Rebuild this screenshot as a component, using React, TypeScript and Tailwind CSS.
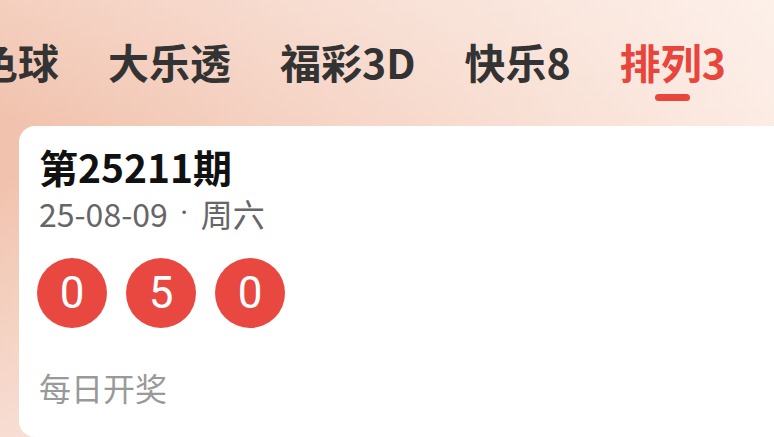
const tabs = ['双色球', '大乐透', '福彩3D', '快乐8', '排列3']
const active = 4
const balls = ['0', '5', '0']

export default function App() {
  return (
    <div
      className="relative w-[774px] h-[437px] overflow-hidden bg-[linear-gradient(90deg,#f1c2ad_0%,#f6d6c8_45%,#fcece4_100%)]"
      style={{ fontFamily: '"Noto Sans CJK SC", "Noto Sans", sans-serif' }}
    >
      {/* soft light wash */}
      <div className="absolute inset-0 bg-[linear-gradient(180deg,rgba(255,255,255,0.22)_0%,rgba(255,255,255,0)_28%,rgba(255,255,255,0)_40%,rgba(255,255,255,0.45)_100%)]" />

      <div className="relative flex flex-col">
        {/* Tabs */}
        <div className="flex gap-[49px] ml-[-64px] mt-[41px]">
          {tabs.map((t, i) => (
            <div key={t} className="flex flex-col items-center shrink-0">
              <span
                className={`text-[41px] leading-[41px] font-bold whitespace-nowrap ${
                  i === active ? 'text-[#e8453c]' : 'text-[#333333]'
                }`}
              >
                {t}
              </span>
              {i === active ? (
                <span className="mt-[12px] w-[35px] h-[7px] rounded-full bg-[#e8453c]" />
              ) : (
                <span className="mt-[12px] h-[7px]" />
              )}
            </div>
          ))}
        </div>

        {/* Card */}
        <div className="ml-[19px] mt-[25px] w-[800px] h-[311px] rounded-[16px] bg-white pl-[20px] pt-[17px]">
          <div className="text-[39px] leading-[46px] font-bold text-[#111111]">第25211期</div>
          <div className="mt-[4px] text-[32px] leading-[40px] text-[#666666] whitespace-nowrap flex">
            <span>25-08-09</span>
            <span className="w-[33px] text-center font-['Roboto',sans-serif]">·</span>
            <span>周六</span>
          </div>
          <div className="mt-[25px] flex gap-[19px] -ml-[2px]">
            {balls.map((b, i) => (
              <div
                key={i}
                className="w-[70px] h-[70px] rounded-full bg-[#e8483f] flex items-center justify-center text-white text-[44px] leading-none font-['Roboto',sans-serif]"
              >
                {b}
              </div>
            ))}
          </div>
          <div className="mt-[43px] text-[32px] leading-[32px] text-[#999999]">每日开奖</div>
        </div>
      </div>
    </div>
  )
}
